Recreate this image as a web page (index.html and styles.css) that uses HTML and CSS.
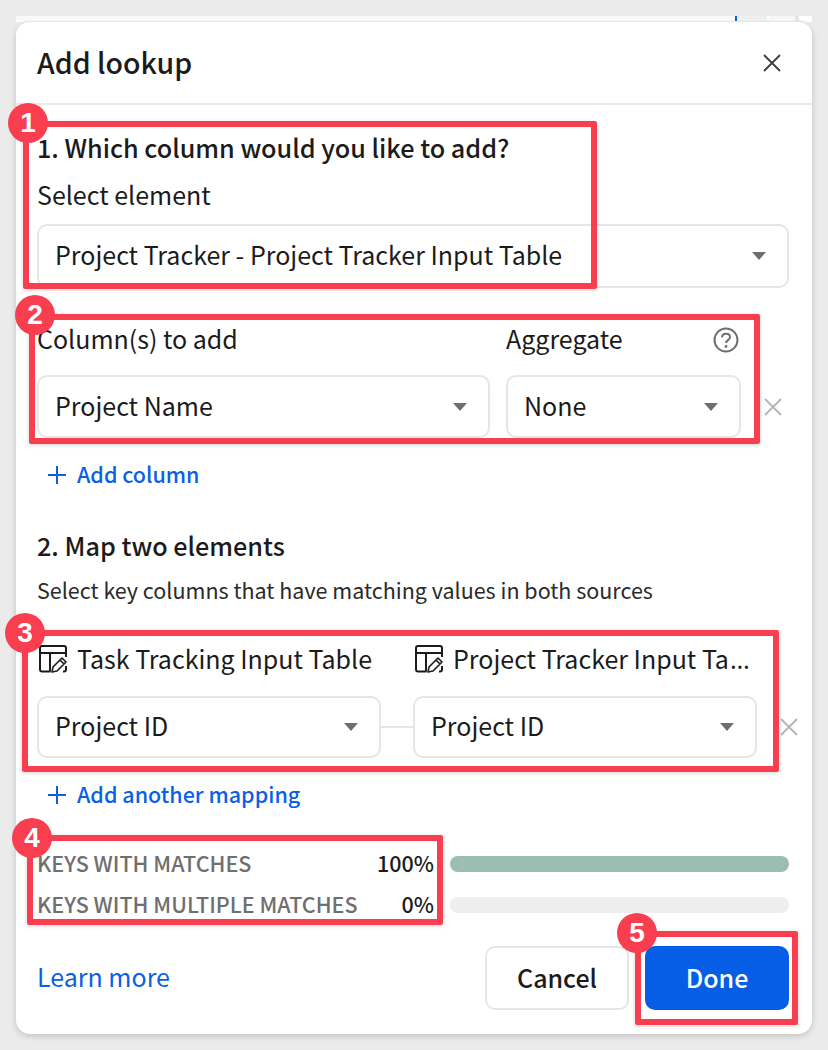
FILE: index.html
```html
<!DOCTYPE html>
<html>
<head>
<meta charset="utf-8">
<title>Add lookup</title>
<link rel="stylesheet" href="styles.css">
</head>
<body>
<svg class="defs" width="0" height="0">
  <symbol id="ico-x" viewBox="0 0 20 20">
    <path d="M2 2L18 18M18 2L2 18" fill="none" stroke="currentColor" stroke-width="1.8"/>
  </symbol>
  <symbol id="ico-table" viewBox="0 0 28 28">
    <path d="M11.500 26.500H3A2 2 0 0 1 1 24.500V3A2 2 0 0 1 3 1H25A2 2 0 0 1 27 3V12M1 8H27M11 8V26.500M27 21V24.500A2 2 0 0 1 25 26.500H24" fill="none" stroke="currentColor" stroke-width="2"/>
    <path d="M13 27L14 22L23 13L27 17L18 26ZM21 15L25 19" fill="none" stroke="currentColor" stroke-width="1.600" stroke-linejoin="round"/>
  </symbol>
</svg>
<div class="page">
  <div class="sheet">
    <span class="sheet-blank"></span>
    <span class="sheet-mark"></span>
    <span class="sheet-cell"></span>
    <span class="sheet-gap"></span>
    <span class="sheet-cell small"></span>
    <span class="sheet-end"></span>
  </div>

  <div class="modal">
    <div class="modal-head">
      <h2>Add lookup</h2>
      <svg class="close"><use href="#ico-x"/></svg>
    </div>
    <div class="modal-body">
      <h3 class="step first">1. Which column would you like to add?</h3>
      <div class="label el-label">Select element</div>
      <div class="select el-select">Project Tracker - Project Tracker Input Table<i class="caret"></i></div>

      <div class="col-labels">
        <div class="label col-a">Column(s) to add</div>
        <div class="label col-b">Aggregate
          <svg class="help" viewBox="0 0 26 26">
            <circle cx="13" cy="13" r="11.500" fill="none" stroke="#6f6f6f" stroke-width="2"/>
            <path d="M9 10.500C9 8 10.800 6.800 13 6.800C15.300 6.800 17 8.200 17 10.200C17 13 13 13.200 13 16" fill="none" stroke="#6f6f6f" stroke-width="2"/>
            <circle cx="13" cy="19.500" r="1.400" fill="#6f6f6f"/>
          </svg>
        </div>
      </div>
      <div class="row col-row">
        <div class="select col-a">Project Name<i class="caret"></i></div>
        <div class="select col-b">None<i class="caret"></i></div>
        <svg class="remove"><use href="#ico-x"/></svg>
      </div>
      <div class="add add-col"><span class="plus"></span>Add column</div>

      <h3 class="step second">2. Map two elements</h3>
      <div class="hint">Select key columns that have matching values in both sources</div>

      <div class="map-head">
        <div class="map-title"><svg class="tbl"><use href="#ico-table"/></svg><span>Task Tracking Input Table</span></div>
        <div class="map-title right"><svg class="tbl"><use href="#ico-table"/></svg><span>Project Tracker Input Ta<span class="dots">…</span></span></div>
      </div>
      <div class="row map-row">
        <div class="select map-sel">Project ID<i class="caret"></i></div>
        <span class="link-line"></span>
        <div class="select map-sel">Project ID<i class="caret"></i></div>
        <svg class="remove"><use href="#ico-x"/></svg>
      </div>
      <div class="add add-map"><span class="plus"></span>Add another mapping</div>

      <div class="metric m1">
        <span class="m-label">KEYS WITH MATCHES</span>
        <span class="m-val">100%</span>
        <div class="bar"><div class="bar-fill" style="width:100%"></div></div>
      </div>
      <div class="metric m2">
        <span class="m-label">KEYS WITH MULTIPLE MATCHES</span>
        <span class="m-val">0%</span>
        <div class="bar"><div class="bar-fill" style="width:0%"></div></div>
      </div>

      <div class="foot">
        <a class="learn">Learn more</a>
        <div class="btn cancel">Cancel</div>
        <div class="btn done">Done</div>
      </div>
    </div>
  </div>

  <div class="mark box1"></div>
  <div class="mark box2"></div>
  <div class="mark box3"></div>
  <div class="mark box4"></div>
  <div class="mark box5"></div>
  <div class="badge b1">1</div>
  <div class="badge b2">2</div>
  <div class="badge b3">3</div>
  <div class="badge b4">4</div>
  <div class="badge b5">5</div>
</div>
</body>
</html>
```
FILE: styles.css
```css
* { box-sizing: border-box; }
body {
  margin: 0;
  background: #ebebeb;
  font-family: "Noto Sans CJK SC", "Noto Sans", sans-serif;
  color: #1b1b1b;
}
.defs { position: absolute; }
.page { position: relative; width: 828px; height: 1050px; overflow: hidden; padding-top: 16px; }

/* sheet peeking out behind the dialog */
.sheet { display: flex; height: 6px; margin: 0 16px; background: #fff; }
.sheet-blank { width: 719px; height: 5px; background: #f8f8f8; }
.sheet-mark { width: 2px; height: 5px; background: #0b5fe6; }
.sheet-cell { width: 30px; height: 5px; background: #efefef; }
.sheet-cell.small { width: 4px; background: #e4e4e4; }
.sheet-gap { width: 26px; height: 5px; margin-left: 2px; background: #f6f6f6; }
.sheet-end { width: 13px; }

.modal {
  width: 796px;
  margin-left: 16px;
  background: #fff;
  border-radius: 14px;
  box-shadow: 0 -2px 0 #e6e6e6, 0 2px 6px rgba(0,0,0,.18);
}
.modal-head {
  display: flex;
  align-items: center;
  justify-content: space-between;
  height: 83px;
  padding: 0 30px 0 21px;
  border-bottom: 2px solid #e9e9e9;
}
.modal-head h2 { margin: 0; height: 40px; font-size: 28.500px; font-weight: 500; line-height: 38px; }
.close { width: 20px; height: 20px; color: #3d3d3d; }

.modal-body { padding: 0 23px 24px 21px; }
.step { margin: 0; height: 34px; font-size: 25.200px; font-weight: 500; line-height: 30px; }
.step.first { margin-top: 27px; }
.step.second { margin-top: 40px; }
.label { height: 34px; font-size: 25px; line-height: 30px; }
.el-label { margin-top: 13px; }

.select {
  position: relative;
  height: 64px;
  padding-left: 16px;
  border: 2px solid #e6e6e6;
  border-radius: 10px;
  background: #fff;
  font-size: 25px;
  line-height: 56px;
  white-space: nowrap;
}
.el-select { margin-top: 11px; }
.col-row .select { height: 63px; line-height: 57px; }
.map-row .select { height: 62px; line-height: 54px; }
.caret {
  position: absolute;
  right: 21px;
  top: 50%;
  margin-top: -4px;
  border-left: 7px solid transparent;
  border-right: 7px solid transparent;
  border-top: 8px solid #6f6f6f;
}
.col-a { width: 453px; }
.col-b { width: 235px; }
.col-labels { display: flex; gap: 16px; margin-top: 35px; }
.col-labels .col-b { display: flex; justify-content: space-between; align-items: flex-start; padding-right: 2px; }
.help { width: 26px; height: 26px; margin-top: 4px; }
.row { display: flex; align-items: center; }
.col-row { gap: 16px; margin-top: 18px; }
.remove { flex: none; width: 20px; height: 20px; margin-left: 6px; color: #b4b4b4; }

.add {
  display: flex;
  align-items: flex-start;
  height: 30px;
  padding-left: 11px;
  font-size: 21.500px;
  font-weight: 500;
  line-height: 28px;
  color: #0b5fe6;
  margin-top: 22px;
}
.plus { position: relative; width: 18px; height: 18px; margin: 6px 11px 0 0; }
.plus::before { content: ""; position: absolute; left: 0; right: 0; top: 8px; height: 2px; background: #0b5fe6; }
.plus::after { content: ""; position: absolute; top: 0; bottom: 0; left: 8px; width: 2px; background: #0b5fe6; }

.hint { margin-top: 12px; height: 30px; font-size: 21.500px; line-height: 28px; color: #2a2a2a; }

.map-head { display: flex; gap: 32px; margin-top: 37px; width: 720px; }
.map-title { display: flex; align-items: flex-start; width: 344px; height: 34px; padding-left: 2px; font-size: 25px; line-height: 30px; white-space: nowrap; }
.dots { margin-left: 1px; font-family: "Noto Sans", sans-serif; letter-spacing: 1.500px; }
.tbl { width: 28px; height: 28px; margin: 2px 10px 0 0; color: #1b1b1b; flex: none; }
.map-row { margin-top: 19px; }
.map-sel { flex: none; width: 344px; }
.link-line { flex: none; width: 32px; height: 2px; background: #e6e6e6; }
.map-row .remove { margin-left: 22px; }

.metric { display: flex; align-items: center; height: 30px; }
.m1 { margin-top: 39px; }
.m2 { margin-top: 11px; }
.m-label { width: 340px; height: 30px; font-size: 21.500px; font-weight: 500; line-height: 28px; color: #6f6f6f; white-space: nowrap; }
.m-val { width: 57px; height: 30px; text-align: right; font-size: 21.500px; font-weight: 500; line-height: 28px; }
.bar { flex: 1; height: 16px; margin-left: 16px; border-radius: 8px; background: #eeeeee; overflow: hidden; }
.bar-fill { height: 100%; background: #9bbdb3; }

.foot { display: flex; align-items: center; gap: 16px; margin-top: 26px; }
.learn { flex: 1; height: 34px; font-size: 25px; line-height: 30px; color: #0b5fe6; }
.btn {
  width: 144px;
  height: 64px;
  border-radius: 10px;
  font-size: 25px;
  font-weight: 500;
  line-height: 58px;
  text-align: center;
}
.cancel { border: 2px solid #e6e6e6; background: #fff; }
.done { border: 2px solid #055ee5; background: #055ee5; color: #fff; }

/* red callouts drawn over the dialog */
.mark { position: absolute; border: 6px solid #f93f4f; border-radius: 2px; box-shadow: 0 1px 4px rgba(0,0,0,.18); }
.box1 { left: 23px; top: 121px; width: 574px; height: 168px; }
.box2 { left: 29px; top: 314px; width: 731px; height: 130px; }
.box3 { left: 22px; top: 630px; width: 757px; height: 142px; }
.box4 { left: 27px; top: 835px; width: 416px; height: 90px; }
.box5 { left: 635px; top: 931px; width: 163px; height: 94px; }
.badge {
  position: absolute;
  width: 40px;
  height: 40px;
  border-radius: 50%;
  background: #f93f4f;
  color: #fff;
  font-family: "Liberation Sans", sans-serif;
  font-size: 28px;
  font-weight: 700;
  line-height: 40px;
  text-align: center;
}
.b1 { left: 8px; top: 103px; }
.b2 { left: 15px; top: 295px; }
.b3 { left: 5px; top: 613px; }
.b4 { left: 12px; top: 818px; }
.b5 { left: 617px; top: 913px; }
```
